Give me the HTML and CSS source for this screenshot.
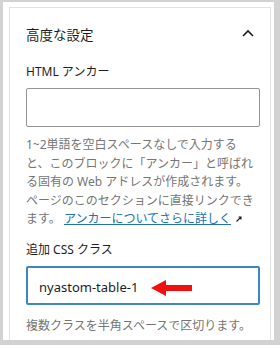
FILE: index.html
```html
<!DOCTYPE html>
<html>
  <head>
    <title>高度な設定</title>
    <link rel="stylesheet" href="styles.css">
  </head>
  <body>
    <div class="frame">
      <div class="panel">
        <div class="panel-header">
          <h2>高度な設定</h2>
          <svg class="chevron" width="12" height="8" viewBox="0 0 12 8">
            <path d="M1 7 L6 2 L11 7" fill="none" stroke="#1e1e1e" stroke-width="1.6" />
          </svg>
        </div>

        <label class="field-label" for="anchor">HTML アンカー</label>
        <input class="field-input" type="text" id="anchor" />
        <p class="help help-anchor">
          1~2単語を空白スペースなしで入力すると、このブロックに「アンカー」と呼ばれる固有の Web アドレスが作成されます。ページのこのセクションに直接リンクできます。 <a href="#">アンカーについてさらに詳しく</a><svg class="ext" width="8" height="8" viewBox="0 0 8 8"><path d="M1.5 6.5 L6 2 M3.5 2 H6 V4.5" fill="none" stroke="#1e1e1e" stroke-width="1.1" /></svg>
        </p>

        <label class="field-label label-css" for="cssClass">追加 CSS クラス</label>
        <div class="input-wrap">
          <input class="field-input focused" type="text" id="cssClass" value="nyastom-table-1" />
          <svg class="red-arrow" width="41" height="16" viewBox="0 0 41 16">
            <polygon points="0,8 15,0 15,5 41,5 41,11 15,11 15,16" fill="#f01010" />
          </svg>
        </div>
        <p class="help help-css">複数クラスを半角スペースで区切ります。</p>
      </div>
    </div>
  </body>
</html>
```

FILE: styles.css
```css
* {
  margin: 0;
  padding: 0;
  box-sizing: border-box;
}

body {
  background: #fff;
  font-family: "Noto Sans", "Noto Sans CJK JP", sans-serif;
  color: #1e1e1e;
}

.frame {
  width: 280px;
  height: 345px;
  border-style: solid;
  border-color: #d2d2d2;
  border-width: 2px 6px 5px 3px;
  padding: 5px 3px 0 6px;
  overflow: hidden;
}

.panel {
  height: 100%;
  border: 1px solid #e2e2e2;
  border-bottom: none;
  padding: 0 10px 0 16px;
}

.panel-header {
  display: flex;
  align-items: center;
  justify-content: space-between;
  padding-right: 6px;
  height: 54px;
}

.panel-header h2 {
  font-size: 13.5px;
  font-weight: 400;
  line-height: 20px;
}

.chevron {
  margin-top: -4px;
}

.field-label {
  display: block;
  font-size: 12px;
  line-height: 16px;
  margin-top: 2px;
  margin-bottom: 8px;
}

.field-input {
  display: block;
  width: 100%;
  height: 39px;
  border: 1px solid #949494;
  border-radius: 2px;
  padding: 0 11px;
  font-family: "Noto Sans", "Noto Sans CJK JP", sans-serif;
  font-size: 13px;
  color: #1e1e1e;
  background: #fff;
}

.field-input.focused {
  border: 2px solid #3b88c8;
  padding-top: 3px;
}

.input-wrap {
  position: relative;
}

.red-arrow {
  position: absolute;
  left: 125px;
  top: 14px;
}

.help {
  font-size: 12px;
  line-height: 18.5px;
  color: #757575;
}

.help-anchor {
  margin-top: 9px;
}

.help a {
  color: #2271b1;
  text-decoration: underline;
}

.ext {
  margin-left: 4px;
}

.label-css {
  margin-top: 13px;
}

.help-css {
  margin-top: 12px;
}
```
